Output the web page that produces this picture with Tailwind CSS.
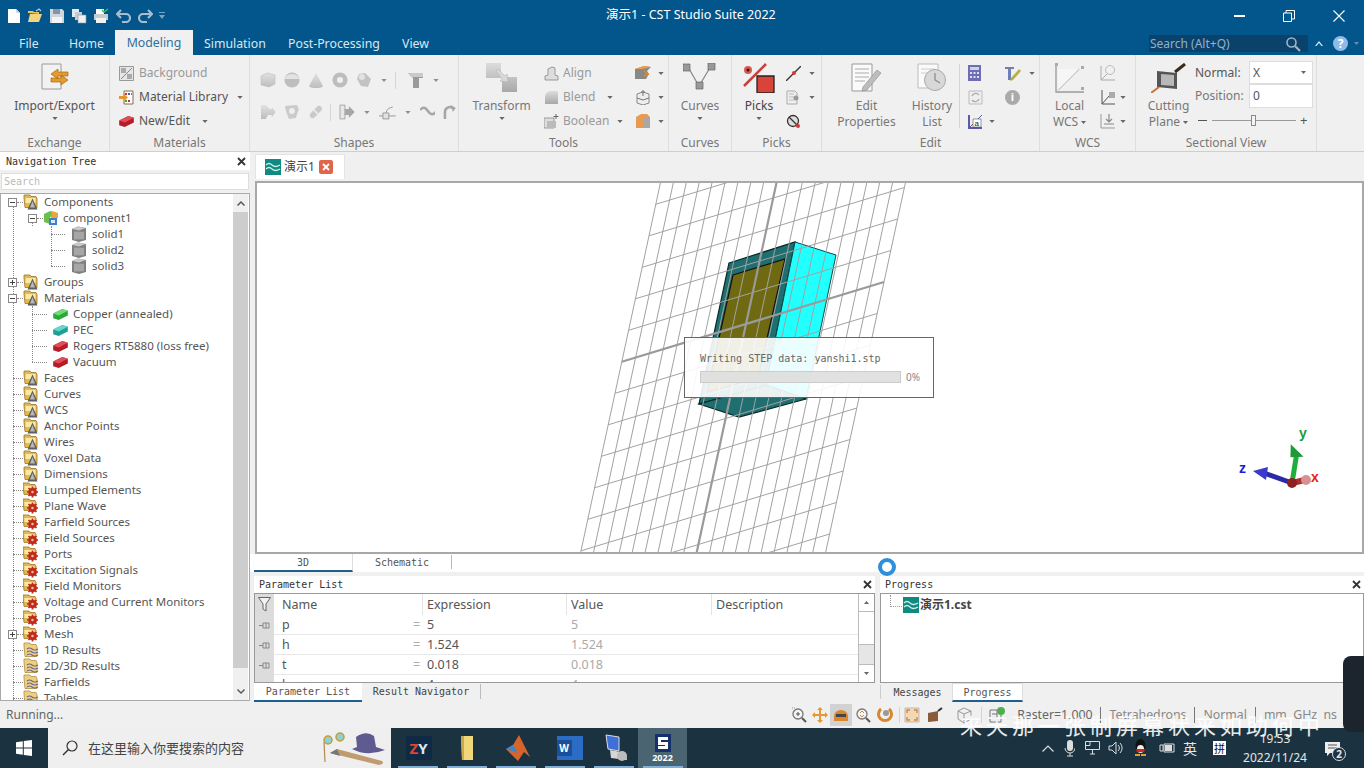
<!DOCTYPE html>
<html lang="zh"><head><meta charset="utf-8"><title>CST Studio Suite 2022</title>
<script src="https://cdn.jsdelivr.net/npm/@tailwindcss/browser@4"></script></head>
<body class="m-0 overflow-hidden">
<svg class="absolute w-0 h-0" aria-hidden="true">
<defs>
<linearGradient id="gy" x1="0" y1="0" x2="0" y2="1"><stop offset="0" stop-color="#dcdcdc"/><stop offset="1" stop-color="#a8a8a8"/></linearGradient>
<symbol id="ftri" viewBox="0 0 16 16"><path d="M1 4V1h6l1 1.500h5l1 2v9H2z" fill="#e3b84e" stroke="#9c7624" stroke-width=".8"/><path d="M2.500 4h10v5h-10z" fill="#fbe9a8"/><path d="M9.500 4.500l5 11H4.500z" fill="#5f5f5f"/><path d="M9.500 7l2.500 6.500H7z" fill="#b8b8b8"/></symbol>
<symbol id="fgear" viewBox="0 0 16 16"><path d="M0 4V1h6l1 1.500h5l1 2v8H1z" fill="#e3b84e" stroke="#9c7624" stroke-width=".8"/><path d="M1.500 4h10v4h-10z" fill="#fbe9a8"/><circle cx="9.500" cy="10" r="4.300" fill="#c22a1c"/><path d="M9.500 4.500v11M4 10h11M5.500 6l8 8M13.500 6l-8 8" stroke="#c22a1c" stroke-width="1.700"/><circle cx="9.500" cy="10" r="1.300" fill="#f0b8a8"/></symbol>
<symbol id="fwave" viewBox="0 0 16 16"><path d="M1 4V1h6l1 1.500h5l1 2v10H2z" fill="#efd07e" stroke="#b08c40" stroke-width=".8"/><path d="M4 7q2.500-2 5 0t6 0M4 10q2.500-2 5 0t6 0M4 13q2.500-2 5 0t6 0" fill="none" stroke="#66669a" stroke-width="1.200"/></symbol>
<symbol id="cube" viewBox="0 0 16 16"><path d="M1 3L7 .5 15 2v12L8 16 1 14z" fill="#7f7f7f"/><path d="M1 3L7 .5 15 2 8 4.500z" fill="#c8c8c8"/><path d="M3 5.500l10 .2v7.500l-10 .3z" fill="#a6a6a6"/></symbol>
<symbol id="bg" viewBox="0 0 16 12"><path d="M0 5L10 0l6 2v5L6 12 0 10z" fill="#2aa838"/><path d="M0 5L10 0l6 2L6 7z" fill="#6fdc78"/></symbol>
<symbol id="bt" viewBox="0 0 16 12"><path d="M0 5L10 0l6 2v5L6 12 0 10z" fill="#1f9f95"/><path d="M0 5L10 0l6 2L6 7z" fill="#63d6cc"/></symbol>
<symbol id="br" viewBox="0 0 16 12"><path d="M0 5L10 0l6 2v5L6 12 0 10z" fill="#b31c28"/><path d="M0 5L10 0l6 2L6 7z" fill="#e24c58"/></symbol>
<symbol id="cst" viewBox="0 0 16 16"><rect width="16" height="16" fill="#0f8a80"/><path d="M1 6q3-3 6 0t8 0M1 10q3-3 6 0t8 0" fill="none" stroke="#cfeee9" stroke-width="1.300"/></symbol>
<symbol id="arr" viewBox="0 0 7 4"><path d="M0 0h7L3.500 4z" fill="#666"/></symbol>
</defs></svg>

<div class="w-[1364px] h-[768px] flex flex-col overflow-hidden relative bg-[#f0f0f0] text-[12px] text-[#555] font-['Noto_Sans','Noto_Sans_CJK_SC',sans-serif]">

<!-- title bar -->
<div class="h-[31px] bg-[#02568c] flex items-center shrink-0 text-white">
  <div class="w-[606px] flex items-center h-full pl-[7px]">
    <svg class="w-[14px] h-4" viewBox="0 0 14 16"><path d="M1 1h8l4 4v10H1z" fill="#fff"/><path d="M9 1v4h4" fill="#cfd8e0"/></svg>
    <svg class="w-4 h-4 ml-[6px]" viewBox="0 0 16 16"><path d="M1 5V3h5l1 1h5v2z" fill="#e9c35f"/><path d="M1 14l2-8h12l-3 8z" fill="#f4d57d"/><path d="M9 3l3-2 2 2" fill="none" stroke="#9fd0ef" stroke-width="1.200"/></svg>
    <svg class="w-[14px] h-[14px] ml-[7px]" viewBox="0 0 14 14"><path d="M0 0h12l2 2v12H0z" fill="#cfd6de"/><path d="M3 0h7v5H3z" fill="#8595a6"/><path d="M2 8h10v6H2z" fill="#f4f4f4"/></svg>
    <svg class="w-4 h-4 ml-[7px]" viewBox="0 0 16 16"><path d="M1 1h7v8H1z" fill="#e6e9ec"/><path d="M4 4h7v8H4z" fill="#c6ccd2"/><path d="M7 7h8v8H7z" fill="#eef0f2" stroke="#8a949e" stroke-width=".6"/></svg>
    <svg class="w-4 h-4 ml-[6px]" viewBox="0 0 16 16"><path d="M3 1h8v5H3z" fill="#fff"/><path d="M1 6h14v6H1z" fill="#c6ccd2"/><path d="M3 10h10v5H3z" fill="#f2f2f2"/><path d="M9 2l2 2 4-3" fill="none" stroke="#3fbf4a" stroke-width="1.500"/></svg>
    <svg class="w-[15px] h-[14px] ml-[7px]" viewBox="0 0 15 14"><path d="M5 1L1 5l4 4M1.500 5H10a3.500 3.500 0 0 1 0 8H6" fill="none" stroke="#a9bccb" stroke-width="2.200"/></svg>
    <svg class="w-[15px] h-[14px] ml-[7px]" viewBox="0 0 15 14"><path d="M10 1l4 4-4 4M13.500 5H5a3.500 3.500 0 0 0 0 8h4" fill="none" stroke="#a9bccb" stroke-width="2.200"/></svg>
    <svg class="w-[6px] h-[7px] ml-[6px]" viewBox="0 0 6 7"><path d="M0 0h6v1H0zM0 3h6L3 7z" fill="#7fa3bd"/></svg>
  </div>
  <div class="text-[12.500px] text-white">演示1 - CST Studio Suite 2022</div>
  <div class="ml-auto flex items-center h-full">
    <div class="w-[50px] flex justify-center"><span class="block w-[11px] h-[2px] bg-white"></span></div>
    <div class="w-[50px] flex justify-center"><svg class="w-3 h-3" viewBox="0 0 12 12"><path d="M.5 3h8v8.500h-8zM3 3V.5h8.500V9H9" fill="none" stroke="#fff"/></svg></div>
    <div class="w-[50px] flex justify-center"><svg class="w-3 h-3" viewBox="0 0 12 12"><path d="M.5.500l11 11M11.500.500l-11 11" stroke="#fff" stroke-width="1.100"/></svg></div>
  </div>
</div>

<!-- tab row -->
<div class="h-6 bg-[#02568c] flex items-end shrink-0 text-[12.300px] text-[#dbe7f0]">
  <div class="h-6 flex items-center pt-[2px] pl-[19px] w-[69px]">File</div>
  <div class="h-6 flex items-center pt-[2px] w-[46px]">Home</div>
  <div class="h-[25px] w-[78px] bg-[#f0f0f0] flex items-center pt-[2px] justify-center text-[#2f6f9e]">Modeling</div>
  <div class="h-6 flex items-center pt-[2px] pl-[11px] w-[95px]">Simulation</div>
  <div class="h-6 flex items-center pt-[2px] w-[114px]">Post-Processing</div>
  <div class="h-6 flex items-center pt-[2px]">View</div>
  <div class="ml-auto h-6 flex items-center pt-[1px]">
    <div class="w-[159px] h-[17px] bg-[#0b426b] flex items-center pl-[1px] text-[12px] text-[#8fb2cc]">Search (Alt+Q)<svg class="w-4 h-4 ml-auto mr-[7px]" viewBox="0 0 16 16"><circle cx="6.500" cy="6.500" r="4.500" fill="none" stroke="#9db5c7" stroke-width="1.600"/><path d="M10 10l5 5" stroke="#9db5c7" stroke-width="2.200"/></svg></div>
    <svg class="w-2 h-[5px] ml-[7px]" viewBox="0 0 8 5"><path d="M0 5l4-5 4 5-1.500 0L4 2 1.500 5z" fill="#dfe8ef"/></svg>
    <div class="w-[15px] h-[15px] rounded-full bg-[#8fbbe8] text-white text-[12px] font-bold flex items-center justify-center ml-[10px]">?</div>
    <svg class="w-[5px] h-[3px] ml-[6px] mr-[5px]" viewBox="0 0 7 4"><path d="M0 0h7L3.500 4z" fill="#5f8fb3"/></svg>
  </div>
</div>

<!-- ribbon -->
<div class="h-[97px] shrink-0 flex border-b border-[#cfcfcf] bg-[#f0f0f0] text-[12px] leading-4 text-[#777] whitespace-nowrap">
  <!-- Exchange -->
  <div class="w-[110px] h-[96px] border-r border-[#dedede] flex flex-col items-center pt-[8px]">
    <svg class="w-7 h-[27px]" viewBox="0 0 28 27"><path d="M1 1h19v25H1z" fill="#f2f2f2" stroke="#9a9a9a"/><path d="M27 9H17v-3l-7 5 7 5v-3h10zM10 15h10v-3l7 5-7 5v-3H10z" fill="#e39a2e" stroke="#a86a14" stroke-width=".7"/></svg>
    <div class="mt-[8px] text-[#555]">Import/Export</div>
    <svg class="w-[6px] h-[3px] mt-[3px]"><use href="#arr"/></svg>
    <div class="mt-auto">Exchange</div>
  </div>
  <!-- Materials -->
  <div class="w-[140px] h-[96px] border-r border-[#dedede] flex flex-col pt-[6px] pl-[9px]">
    <div class="h-6 flex items-center text-[#999]"><svg class="w-[15px] h-[15px]" viewBox="0 0 15 15"><path d="M.5.500h14v14H.5z" fill="#e6e6e6" stroke="#999"/><path d="M2 2h5v5H2zM8 8h5v5H8z" fill="#aaa"/><path d="M2 13L13 2" stroke="#888"/></svg><span class="ml-[5px]">Background</span></div>
    <div class="h-6 flex items-center"><svg class="w-[15px] h-[15px]" viewBox="0 0 15 15"><path d="M5 1h9v13H5z" fill="#fff" stroke="#8a6a4a"/><path d="M6 3h2v2H6z" fill="#c33"/><path d="M9 3h2v2H9z" fill="#36c"/><path d="M12 3h1v2h-1zM6 10h2v2H6z" fill="#3a3"/><path d="M9 10h2v2H9z" fill="#c33"/><path d="M0 6h5V4l4 3.500-4 3.500V9H0z" fill="#e6962c"/></svg><span class="ml-[5px] text-[#555]">Material Library</span><svg class="w-[6px] h-[3px] ml-[9px]"><use href="#arr"/></svg></div>
    <div class="h-6 flex items-center"><svg class="w-[15px] h-[11px]"><use href="#br"/></svg><span class="ml-[5px] text-[#555]">New/Edit</span><svg class="w-[6px] h-[3px] ml-[12px]"><use href="#arr"/></svg></div>
    <div class="mt-auto text-center pr-[9px]">Materials</div>
  </div>
  <!-- Shapes -->
  <div class="w-[209px] h-[96px] border-r border-[#dedede] flex flex-col pl-[10px]">
    <div class="h-8 mt-[9px] flex items-center gap-2 opacity-70">
      <svg class="w-4 h-4" viewBox="0 0 16 16"><path d="M1 4l6-3 8 2v9l-6 3-8-2z" fill="url(#gy)" stroke="#aaa" stroke-width=".6"/></svg>
      <svg class="w-4 h-4" viewBox="0 0 16 16"><circle cx="8" cy="8" r="7.500" fill="#aaa"/><path d="M1 7a7 5 0 0 1 14 0z" fill="#ddd"/></svg>
      <svg class="w-4 h-4" viewBox="0 0 16 16"><path d="M8 1l7 13a7 2 0 0 1-14 0z" fill="url(#gy)"/></svg>
      <svg class="w-4 h-4" viewBox="0 0 16 16"><circle cx="8" cy="8" r="5.300" fill="none" stroke="#a8a8a8" stroke-width="4.500"/></svg>
      <svg class="w-4 h-4" viewBox="0 0 16 16"><path d="M3 2l6-1 6 6-3 8-7-1-4-7z" fill="#b0b0b0"/><circle cx="6" cy="5" r="3" fill="#ddd"/></svg>
      <svg class="w-[6px] h-[3px] ml-[1px]"><use href="#arr"/></svg>
      <span class="block w-px h-[17px] bg-[#ccc]"></span>
      <svg class="w-[18px] h-[17px] ml-[3px]" viewBox="0 0 18 17"><path d="M1 1h15v5l-4 0v10H6V6z" fill="#777"/><path d="M1 1h15v4H4z" fill="#bbb"/></svg>
      <svg class="w-[6px] h-[3px]"><use href="#arr"/></svg>
    </div>
    <div class="h-8 flex items-center gap-2 opacity-70">
      <svg class="w-4 h-4" viewBox="0 0 16 16"><path d="M1 1h5l4 4h2V3l4 5-4 5v-2H8l-2 4H1z" fill="url(#gy)"/></svg>
      <svg class="w-4 h-4" viewBox="0 0 16 16"><path d="M1 2l12-1 2 4-3 9-7 1-3-8z" fill="#bbb"/><circle cx="8" cy="7" r="3" fill="#eee"/></svg>
      <svg class="w-4 h-4" viewBox="0 0 16 16"><path d="M2 10l8-8a3 3 0 0 1 4 4l-8 8a3 3 0 0 1-4-4z" fill="#bbb"/><path d="M6 6l4 4" stroke="#eee" stroke-width="1.500"/></svg>
      <span class="block w-px h-[17px] bg-[#ccc] -ml-[1px]"></span>
      <svg class="w-4 h-4" viewBox="0 0 16 16"><path d="M1 1h5v14H1z" fill="#e4e4e4" stroke="#888"/><path d="M6 5h4V2l6 6-6 6v-3H6z" fill="#888"/></svg>
      <svg class="w-[6px] h-[3px] ml-[1px]"><use href="#arr"/></svg>
      <svg class="w-[17px] h-[15px] ml-px" viewBox="0 0 17 15"><path d="M0 11h17" stroke="#777"/><path d="M4 8h6v6H4z" fill="#ddd" stroke="#777"/><path d="M7 8a8 8 0 0 1 7-6" fill="none" stroke="#777"/></svg>
      <svg class="w-[6px] h-[3px] ml-[1px]"><use href="#arr"/></svg>
      <svg class="w-4 h-3 ml-px" viewBox="0 0 16 12"><path d="M0 4q4-5 8 1t8 1" fill="none" stroke="#888" stroke-width="2.600"/></svg>
      <svg class="w-4 h-4 -ml-[1px]" viewBox="0 0 16 16"><path d="M3 15V8a5 5 0 0 1 8-4" fill="none" stroke="#888" stroke-width="2.600"/><path d="M9 1l5 3-3 4z" fill="#888"/></svg>
    </div>
    <div class="mt-auto text-center pr-[10px]">Shapes</div>
  </div>
  <!-- Tools -->
  <div class="w-[210px] h-[96px] border-r border-[#dedede] flex flex-col">
    <div class="flex h-[72px] pt-[6px]">
      <div class="w-[85px] flex flex-col items-center pt-[2px]">
        <svg class="w-[31px] h-[29px] shrink-0" viewBox="0 0 31 29"><path d="M0 0h15v15H0zM16 14h15v15H16z" fill="url(#gy)"/><path d="M10 8l2-2 7 7 2-2 1 8-8-1 2-2z" fill="#d8d8d8" stroke="#aaa" stroke-width=".5"/></svg>
        <div class="mt-[6px]">Transform</div>
        <svg class="w-[6px] h-[3px] mt-[3px] shrink-0"><use href="#arr"/></svg>
      </div>
      <div class="w-[89px]">
        <div class="h-6 flex items-center"><svg class="w-[15px] h-[15px]" viewBox="0 0 15 15"><path d="M1 14V10l3-1V3l4-2 3 1v7l3 1v4z" fill="#ddd" stroke="#999"/></svg><span class="ml-[4px] text-[#999]">Align</span></div>
        <div class="h-6 flex items-center"><svg class="w-[15px] h-[15px]" viewBox="0 0 15 15"><path d="M1 14V7a6 6 0 0 1 6-6h7v13z" fill="url(#gy)"/></svg><span class="ml-[4px] text-[#999]">Blend</span><svg class="w-[6px] h-[3px] ml-[12px]"><use href="#arr"/></svg></div>
        <div class="h-6 flex items-center"><svg class="w-[15px] h-[15px]" viewBox="0 0 15 15"><path d="M0 4h10v10H0z" fill="#ddd" stroke="#999"/><path d="M3 7h9v7H3z" fill="#bbb"/><path d="M12 0v5M9.500 2.500h5" stroke="#666"/></svg><span class="ml-[4px] text-[#999]">Boolean</span><svg class="w-[6px] h-[3px] ml-[8px]"><use href="#arr"/></svg></div>
      </div>
      <div class="w-[35px] pl-[2px]">
        <div class="h-6 flex items-center"><svg class="w-4 h-4" viewBox="0 0 16 16"><path d="M0 4l9-3 7 1-4 4 2 3-3 5H0z" fill="#888"/><path d="M0 4l9-3 7 1-9 2z" fill="#f0a040"/><path d="M9 6l4 3-4 2" fill="none" stroke="#e08a20" stroke-width="1.500"/></svg><svg class="w-[6px] h-[3px] ml-[7px]"><use href="#arr"/></svg></div>
        <div class="h-6 flex items-center"><svg class="w-4 h-4" viewBox="0 0 16 16"><path d="M2 5l6-2 6 2v9l-6 2-6-2z" fill="#eee" stroke="#888"/><path d="M2 9l6 2 6-2M8 1v6M6 3h4" fill="none" stroke="#777"/></svg><svg class="w-[6px] h-[3px] ml-[7px]"><use href="#arr"/></svg></div>
        <div class="h-6 flex items-center"><svg class="w-4 h-4" viewBox="0 0 16 16"><path d="M1 4l5-3h6l3 3v11H1z" fill="#e89a50"/><path d="M8 4h7v11H8z" fill="#a8a8a8"/></svg><svg class="w-[6px] h-[3px] ml-[7px]"><use href="#arr"/></svg></div>
      </div>
    </div>
    <div class="mt-auto text-center">Tools</div>
  </div>
  <!-- Curves -->
  <div class="w-[63px] h-[96px] border-r border-[#dedede] flex flex-col items-center pt-[8px]">
    <svg class="w-[34px] h-[29px]" viewBox="0 0 34 29"><path d="M5 4L16 23 28 3" fill="none" stroke="#888" stroke-width="1.200"/><path d="M0 1h7v7H0zM13 19h7v7h-7zM25 0h7v7h-7z" fill="#999" stroke="#666" stroke-width=".7"/></svg>
    <div class="mt-[6px]">Curves</div>
    <svg class="w-[6px] h-[3px] mt-[3px]"><use href="#arr"/></svg>
    <div class="mt-auto">Curves</div>
  </div>
  <!-- Picks -->
  <div class="w-[90px] h-[96px] border-r border-[#dedede] flex flex-col">
    <div class="flex h-[72px]">
      <div class="w-[54px] flex flex-col items-center pt-[8px]">
        <svg class="w-8 h-[30px] shrink-0" viewBox="0 0 32 30"><path d="M1 23L23 1" stroke="#c9403a" stroke-width="2.500"/><circle cx="5" cy="7" r="4" fill="#d65a50"/><circle cx="5" cy="7" r="1.500" fill="#400"/><path d="M14 13h17v17H14z" fill="#d8443a" stroke="#222" stroke-width="1.300"/></svg>
        <div class="mt-[5px] text-[#444]">Picks</div>
        <svg class="w-[6px] h-[3px] mt-[3px] shrink-0"><use href="#arr"/></svg>
      </div>
      <div class="pt-[6px]">
        <div class="h-6 flex items-center"><svg class="w-[15px] h-[15px]" viewBox="0 0 15 15"><path d="M0 15L15 0" stroke="#333" stroke-width="1.300"/><circle cx="8" cy="7" r="2" fill="#d33"/></svg><svg class="w-[6px] h-[3px] ml-[8px]"><use href="#arr"/></svg></div>
        <div class="h-6 flex items-center"><svg class="w-[15px] h-[15px]" viewBox="0 0 15 15"><path d="M1 1h8l2 2v11H1z" fill="#eee" stroke="#aaa"/><path d="M3 4h5M3 7h5M3 10h5" stroke="#bbb"/><circle cx="10" cy="8" r="2.500" fill="#999"/></svg><svg class="w-[6px] h-[3px] ml-[8px]"><use href="#arr"/></svg></div>
        <div class="h-6 flex items-center"><svg class="w-[15px] h-[15px]" viewBox="0 0 15 15"><circle cx="7" cy="7" r="5.500" fill="#ddd" stroke="#333" stroke-width="1.300"/><path d="M3 3l9 9" stroke="#333" stroke-width="1.300"/><circle cx="12" cy="12" r="2" fill="#d33"/></svg></div>
      </div>
    </div>
    <div class="mt-auto text-center">Picks</div>
  </div>
  <!-- Edit -->
  <div class="w-[218px] h-[96px] border-r border-[#dedede] flex flex-col">
    <div class="flex h-[72px]">
      <div class="w-[89px] flex flex-col items-center pt-[8px] leading-4">
        <svg class="w-[31px] h-[29px] shrink-0" viewBox="0 0 31 29"><path d="M1 1h20v27H1z" fill="#fafafa" stroke="#999"/><path d="M4 6h14M4 10h14M4 14h14M4 18h10" stroke="#aaa"/><path d="M12 24l14-17 4 3-14 17-5 1z" fill="#bdbdbd" stroke="#888" stroke-width=".6"/></svg>
        <div class="mt-[6px]">Edit</div><div>Properties</div>
      </div>
      <div class="w-[42px] flex flex-col items-center pt-[8px] leading-4">
        <svg class="w-[31px] h-[29px] shrink-0" viewBox="0 0 31 29"><path d="M1 1h20v24H1z" fill="#fafafa" stroke="#bbb"/><path d="M4 6h14M4 10h12" stroke="#ccc"/><circle cx="18" cy="17" r="10.500" fill="#d8d8d8" stroke="#aaa"/><path d="M18 10v7l5 3" fill="none" stroke="#888" stroke-width="1.200"/></svg>
        <div class="mt-[6px]">History</div><div>List</div>
      </div>
      <div class="w-px h-[64px] mt-[9px] bg-[#d4d4d4] ml-[6px] mr-[8px]"></div>
      <div class="w-[37px] pt-[6px]">
        <div class="h-6 flex items-center"><svg class="w-[13px] h-4" viewBox="0 0 13 16"><path d="M0 0h13v16H0z" fill="#6d6fb2"/><path d="M2 2h9v3H2z" fill="#cfd0ea"/><path d="M2 7h2v2H2zM5.500 7h2v2h-2zM9 7h2v2H9zM2 11h2v2H2zM5.500 11h2v2h-2zM9 11h2v2H9z" fill="#e0e0f0"/></svg></div>
        <div class="h-6 flex items-center"><svg class="w-[15px] h-[15px]" viewBox="0 0 15 15"><path d="M1 1h13v13H1z" fill="#eee" stroke="#bbb"/><path d="M4 6a4 4 0 0 1 7-1M11 9a4 4 0 0 1-7 1" fill="none" stroke="#aaa" stroke-width="1.300"/></svg></div>
        <div class="h-6 flex items-center"><svg class="w-[15px] h-[15px]" viewBox="0 0 15 15"><path d="M1 1v13h13" fill="none" stroke="#5a5aa8" stroke-width="2"/><path d="M1 14L14 1" stroke="#5a5aa8"/><path d="M5 5h8v8H5z" fill="#fff" stroke="#555" stroke-width=".6"/><text x="6.500" y="12" font-size="8" fill="#222" font-family="Liberation Sans">a</text></svg><svg class="w-[6px] h-[3px] ml-[6px]"><use href="#arr"/></svg></div>
      </div>
      <div class="pt-[6px]">
        <div class="h-6 flex items-center"><svg class="w-[16px] h-[15px]" viewBox="0 0 16 15"><path d="M0 1h9v2H6v11H3V3H0z" fill="#6d7fb5"/><path d="M6 12L14 3l2 2-8 9-3 1z" fill="#b8b040"/></svg><svg class="w-[6px] h-[3px] ml-[8px]"><use href="#arr"/></svg></div>
        <div class="h-6 flex items-center"><div class="w-[15px] h-[15px] rounded-full bg-[#aaa] text-white text-[11px] font-bold flex items-center justify-center">i</div></div>
      </div>
    </div>
    <div class="mt-auto text-center">Edit</div>
  </div>
  <!-- WCS -->
  <div class="w-[96px] h-[96px] border-r border-[#dedede] flex flex-col">
    <div class="flex h-[72px]">
      <div class="w-[59px] flex flex-col items-center pt-[8px] leading-4">
        <svg class="w-[30px] h-[30px] shrink-0" viewBox="0 0 30 30"><path d="M1 1v28h28" fill="none" stroke="#999" stroke-width="1.300"/><path d="M3 27L24 6" stroke="#aaa" stroke-width="1.300"/><path d="M3 27V6h21z" fill="#f6f6f6"/><path d="M0 0h3v3H0zM26 3h3v3h-3zM26 24h3v3h-3z" fill="#aaa"/></svg>
        <div class="mt-[5px]">Local</div><div class="flex items-center">WCS<svg class="w-[5px] h-[3px] ml-[3px]"><use href="#arr"/></svg></div>
      </div>
      <div class="pt-[6px] pl-[1px]">
        <div class="h-6 flex items-center"><svg class="w-4 h-4" viewBox="0 0 16 16"><path d="M1 1v14h14M1 15L8 8" fill="none" stroke="#aaa"/><circle cx="10" cy="5" r="4.500" fill="#f0f0f0" stroke="#bbb"/></svg></div>
        <div class="h-6 flex items-center"><svg class="w-4 h-4" viewBox="0 0 16 16"><path d="M2 1v14h13M2 15L9 7" fill="none" stroke="#555"/><path d="M9 3h6v6H9z" fill="#aaa"/></svg><svg class="w-[6px] h-[3px] ml-[4px]"><use href="#arr"/></svg></div>
        <div class="h-6 flex items-center"><svg class="w-4 h-4" viewBox="0 0 16 16"><path d="M1 1v14h14" fill="none" stroke="#999"/><path d="M9 1v8M6 6l3 3 3-3M4 11h10" fill="none" stroke="#888" stroke-width="1.200"/></svg><svg class="w-[6px] h-[3px] ml-[4px]"><use href="#arr"/></svg></div>
      </div>
    </div>
    <div class="mt-auto text-center">WCS</div>
  </div>
  <!-- Sectional -->
  <div class="w-[181px] h-[96px] border-r border-[#dedede] flex flex-col">
    <div class="flex h-[72px]">
      <div class="w-[59px] pl-[6px] flex flex-col items-center pt-[8px] leading-4">
        <svg class="w-9 h-[30px] shrink-0" viewBox="0 0 36 30"><path d="M6 8l20 2v16L6 24z" fill="#555"/><path d="M10 11l13 1v11l-13-1z" fill="#b8b8b8"/><path d="M24 9l10-8" stroke="#3a2a1a" stroke-width="3"/><path d="M0 30l8-6" stroke="#c9703a" stroke-width="2"/></svg>
        <div class="mt-[5px]">Cutting</div><div class="flex items-center">Plane<svg class="w-[5px] h-[3px] ml-[3px]"><use href="#arr"/></svg></div>
      </div>
      <div class="pt-[6px] w-[118px]">
        <div class="flex items-center h-[23px]"><span class="w-[54px] text-[#555]">Normal:</span><div class="w-[64px] h-[23px] bg-white border border-[#ddd] flex items-center pl-[3px] text-[#555]">X<svg class="w-[5px] h-[3px] ml-auto mr-[6px]"><use href="#arr"/></svg></div></div>
        <div class="flex items-center h-[24px]"><span class="w-[54px]">Position:</span><div class="w-[64px] h-[24px] bg-white border border-[#ddd] flex items-center pl-[3px] text-[#555]">0</div></div>
        <div class="flex items-center h-6 pl-[3px] text-[#555]"><span class="w-[9px] h-px bg-[#555]"></span><div class="relative w-[84px] h-px bg-[#999] ml-[5px]"><span class="absolute left-[39px] -top-[5px] w-[5px] h-[11px] bg-[#f4f4f4] border border-[#888]"></span></div><span class="ml-[4px] text-[13px]">+</span></div>
      </div>
    </div>
    <div class="mt-auto text-center">Sectional View</div>
  </div>
</div>

<!-- main -->
<div class="h-[550px] shrink-0 flex">
  <!-- nav panel -->
  <div class="w-[250px] shrink-0 flex flex-col">
    <div class="h-[18px] bg-white flex items-center px-[6px] font-['DejaVu_Sans_Mono',monospace] text-[10px] text-[#333]">Navigation Tree<svg class="w-[9px] h-[9px] ml-auto -mr-[2px]" viewBox="0 0 9 9"><path d="M1 1l7 7M8 1l-7 7" stroke="#333" stroke-width="1.800"/></svg></div>
    <div class="h-[17px] mt-[3px] mx-[1px] bg-white border border-[#ddd] flex items-center pl-[2px] font-['DejaVu_Sans_Mono',monospace] text-[10px] text-[#bbb]">Search</div>
    <div class="h-[508px] mt-[3px] border border-[#aaa] bg-white flex overflow-hidden relative text-[11.500px] text-[#555] leading-4">
      <!-- dotted trunk lines -->
      <span class="absolute left-[12px] top-[8px] h-[510px] border-l border-dotted border-[#888]"></span>
      <span class="absolute left-[31px] top-[24px] h-[8px] border-l border-dotted border-[#888]"></span>
      <span class="absolute left-[50px] top-[32px] h-[40px] border-l border-dotted border-[#888]"></span>
      <span class="absolute left-[31px] top-[112px] h-[56px] border-l border-dotted border-[#888]"></span>
      <div class="w-[232px] shrink-0 relative">
        <div class="flex items-center h-4 pl-[7px]"><span class="relative w-[9px] h-[9px] border border-[#888] bg-white flex items-center justify-center"><span class="w-[5px] h-px bg-[#444]"></span></span><span class="w-[6px] border-t border-dotted border-[#888]"></span><svg class="w-4 h-4"><use href="#ftri"/></svg><span class="ml-[5px]">Components</span></div>
        <div class="flex items-center h-4 pl-[27px]"><span class="relative w-[9px] h-[9px] border border-[#888] bg-white flex items-center justify-center"><span class="w-[5px] h-px bg-[#444]"></span></span><span class="w-[6px] border-t border-dotted border-[#888]"></span><svg class="w-4 h-4" viewBox="0 0 16 16"><path d="M1 4l6-3 6 2v4H7v7L1 12z" fill="#6fbe4a"/><path d="M9 1l6 2v5H8z" fill="#e9a63c"/><path d="M6 8h8v7H6z" fill="#3f7fd0"/><path d="M8 10h4v3H8z" fill="#d8e8fa"/></svg><span class="ml-[4px]">component1</span></div>
        <div class="flex items-center h-4 pl-[50px]"><span class="w-[14px] border-t border-dotted border-[#888]"></span><svg class="w-4 h-4 ml-[6px]"><use href="#cube"/></svg><span class="ml-[5px]">solid1</span></div>
        <div class="flex items-center h-4 pl-[50px]"><span class="w-[14px] border-t border-dotted border-[#888]"></span><svg class="w-4 h-4 ml-[6px]"><use href="#cube"/></svg><span class="ml-[5px]">solid2</span></div>
        <div class="flex items-center h-4 pl-[50px]"><span class="w-[14px] border-t border-dotted border-[#888]"></span><svg class="w-4 h-4 ml-[6px]"><use href="#cube"/></svg><span class="ml-[5px]">solid3</span></div>
        <div class="flex items-center h-4 pl-[7px]"><span class="relative w-[9px] h-[9px] border border-[#888] bg-white flex items-center justify-center text-[#444]"><svg class="w-[5px] h-[5px]" viewBox="0 0 5 5"><path d="M0 2.500h5M2.500 0v5" stroke="#444"/></svg></span><span class="w-[6px] border-t border-dotted border-[#888]"></span><svg class="w-4 h-4"><use href="#ftri"/></svg><span class="ml-[5px]">Groups</span></div>
        <div class="flex items-center h-4 pl-[7px]"><span class="relative w-[9px] h-[9px] border border-[#888] bg-white flex items-center justify-center"><span class="w-[5px] h-px bg-[#444]"></span></span><span class="w-[6px] border-t border-dotted border-[#888]"></span><svg class="w-4 h-4"><use href="#ftri"/></svg><span class="ml-[5px]">Materials</span></div>
        <div class="flex items-center h-4 pl-[31px]"><span class="w-[15px] border-t border-dotted border-[#888]"></span><svg class="w-[15px] h-[11px] ml-[6px]"><use href="#bg"/></svg><span class="ml-[5px]">Copper (annealed)</span></div>
        <div class="flex items-center h-4 pl-[31px]"><span class="w-[15px] border-t border-dotted border-[#888]"></span><svg class="w-[15px] h-[11px] ml-[6px]"><use href="#bt"/></svg><span class="ml-[5px]">PEC</span></div>
        <div class="flex items-center h-4 pl-[31px]"><span class="w-[15px] border-t border-dotted border-[#888]"></span><svg class="w-[15px] h-[11px] ml-[6px]"><use href="#br"/></svg><span class="ml-[5px]">Rogers RT5880 (loss free)</span></div>
        <div class="flex items-center h-4 pl-[31px]"><span class="w-[15px] border-t border-dotted border-[#888]"></span><svg class="w-[15px] h-[11px] ml-[6px]"><use href="#br"/></svg><span class="ml-[5px]">Vacuum</span></div>
        <div class="flex items-center h-4 pl-[12px]"><span class="w-[10px] border-t border-dotted border-[#888]"></span><svg class="w-4 h-4"><use href="#ftri"/></svg><span class="ml-[5px]">Faces</span></div>
        <div class="flex items-center h-4 pl-[12px]"><span class="w-[10px] border-t border-dotted border-[#888]"></span><svg class="w-4 h-4"><use href="#ftri"/></svg><span class="ml-[5px]">Curves</span></div>
        <div class="flex items-center h-4 pl-[12px]"><span class="w-[10px] border-t border-dotted border-[#888]"></span><svg class="w-4 h-4"><use href="#ftri"/></svg><span class="ml-[5px]">WCS</span></div>
        <div class="flex items-center h-4 pl-[12px]"><span class="w-[10px] border-t border-dotted border-[#888]"></span><svg class="w-4 h-4"><use href="#ftri"/></svg><span class="ml-[5px]">Anchor Points</span></div>
        <div class="flex items-center h-4 pl-[12px]"><span class="w-[10px] border-t border-dotted border-[#888]"></span><svg class="w-4 h-4"><use href="#ftri"/></svg><span class="ml-[5px]">Wires</span></div>
        <div class="flex items-center h-4 pl-[12px]"><span class="w-[10px] border-t border-dotted border-[#888]"></span><svg class="w-4 h-4"><use href="#ftri"/></svg><span class="ml-[5px]">Voxel Data</span></div>
        <div class="flex items-center h-4 pl-[12px]"><span class="w-[10px] border-t border-dotted border-[#888]"></span><svg class="w-4 h-4"><use href="#ftri"/></svg><span class="ml-[5px]">Dimensions</span></div>
        <div class="flex items-center h-4 pl-[12px]"><span class="w-[10px] border-t border-dotted border-[#888]"></span><svg class="w-4 h-4"><use href="#fgear"/></svg><span class="ml-[5px]">Lumped Elements</span></div>
        <div class="flex items-center h-4 pl-[12px]"><span class="w-[10px] border-t border-dotted border-[#888]"></span><svg class="w-4 h-4"><use href="#fgear"/></svg><span class="ml-[5px]">Plane Wave</span></div>
        <div class="flex items-center h-4 pl-[12px]"><span class="w-[10px] border-t border-dotted border-[#888]"></span><svg class="w-4 h-4"><use href="#fgear"/></svg><span class="ml-[5px]">Farfield Sources</span></div>
        <div class="flex items-center h-4 pl-[12px]"><span class="w-[10px] border-t border-dotted border-[#888]"></span><svg class="w-4 h-4"><use href="#fgear"/></svg><span class="ml-[5px]">Field Sources</span></div>
        <div class="flex items-center h-4 pl-[12px]"><span class="w-[10px] border-t border-dotted border-[#888]"></span><svg class="w-4 h-4"><use href="#fgear"/></svg><span class="ml-[5px]">Ports</span></div>
        <div class="flex items-center h-4 pl-[12px]"><span class="w-[10px] border-t border-dotted border-[#888]"></span><svg class="w-4 h-4"><use href="#fgear"/></svg><span class="ml-[5px]">Excitation Signals</span></div>
        <div class="flex items-center h-4 pl-[12px]"><span class="w-[10px] border-t border-dotted border-[#888]"></span><svg class="w-4 h-4"><use href="#fgear"/></svg><span class="ml-[5px]">Field Monitors</span></div>
        <div class="flex items-center h-4 pl-[12px]"><span class="w-[10px] border-t border-dotted border-[#888]"></span><svg class="w-4 h-4"><use href="#fgear"/></svg><span class="ml-[5px]">Voltage and Current Monitors</span></div>
        <div class="flex items-center h-4 pl-[12px]"><span class="w-[10px] border-t border-dotted border-[#888]"></span><svg class="w-4 h-4"><use href="#fgear"/></svg><span class="ml-[5px]">Probes</span></div>
        <div class="flex items-center h-4 pl-[7px]"><span class="relative w-[9px] h-[9px] border border-[#888] bg-white flex items-center justify-center"><svg class="w-[5px] h-[5px]" viewBox="0 0 5 5"><path d="M0 2.500h5M2.500 0v5" stroke="#444"/></svg></span><span class="w-[6px] border-t border-dotted border-[#888]"></span><svg class="w-4 h-4"><use href="#fgear"/></svg><span class="ml-[5px]">Mesh</span></div>
        <div class="flex items-center h-4 pl-[12px]"><span class="w-[10px] border-t border-dotted border-[#888]"></span><svg class="w-4 h-4"><use href="#fwave"/></svg><span class="ml-[5px]">1D Results</span></div>
        <div class="flex items-center h-4 pl-[12px]"><span class="w-[10px] border-t border-dotted border-[#888]"></span><svg class="w-4 h-4"><use href="#fwave"/></svg><span class="ml-[5px]">2D/3D Results</span></div>
        <div class="flex items-center h-4 pl-[12px]"><span class="w-[10px] border-t border-dotted border-[#888]"></span><svg class="w-4 h-4"><use href="#fwave"/></svg><span class="ml-[5px]">Farfields</span></div>
        <div class="flex items-center h-4 pl-[12px]"><span class="w-[10px] border-t border-dotted border-[#888]"></span><svg class="w-4 h-4"><use href="#fwave"/></svg><span class="ml-[5px]">Tables</span></div>
      </div>
      <div class="w-[15px] shrink-0 flex flex-col bg-[#f0f0f0]">
        <div class="h-[18px] flex items-center justify-center"><svg class="w-[8px] h-[5px]" viewBox="0 0 8 5"><path d="M0 4l4-4 4 4-1 1-3-3-3 3z" fill="#555"/></svg></div>
        <div class="h-[456px] bg-[#cdcdcd]"></div>
        <div class="flex-1 flex items-end justify-center pb-[6px]"><svg class="w-[8px] h-[5px]" viewBox="0 0 8 5"><path d="M0 1l4 4 4-4-1-1-3 3-3-3z" fill="#555"/></svg></div>
      </div>
    </div>
  </div>

  <!-- right -->
  <div class="flex-1 flex flex-col min-w-0">
    <div class="h-[29px] pl-[5px] pt-[2px] shrink-0">
      <div class="w-[90px] h-[25px] bg-white border border-[#e4e4e4] border-b-0 flex items-center pl-[9px]"><svg class="w-4 h-4"><use href="#cst"/></svg><span class="ml-[3px] text-[#444]">演示1</span><span class="ml-[4px] w-[14px] h-[14px] rounded-[2px] bg-[#e0664a] flex items-center justify-center"><svg class="w-2 h-2" viewBox="0 0 8 8"><path d="M1 1l6 6M7 1L1 7" stroke="#fff" stroke-width="1.800"/></svg></span></div>
    </div>
    <!-- canvas -->
    <div class="h-[373px] ml-[5px] border-2 border-[#a8a8a8] bg-white relative overflow-hidden shrink-0">
      <svg class="block" width="1105" height="369" viewBox="257 183 1105 369">
        <path d="M729 263L795 242L766 385L699 404Z" fill="#1f6f70" stroke="#06282a" stroke-width="1.200"/>
        <path d="M733 275L785 259L758 378L707 392Z" fill="#6f6a12" stroke="#111" stroke-width="1.200"/>
        <path d="M795 242L836 255L806 399L766 385Z" fill="#22ffff" stroke="#0a4a4a" stroke-width="1"/>
        <path d="M699 404L739 417L806 399L766 385Z" fill="#1f6f70" stroke="#06282a" stroke-width="1.200"/>
        <g transform="matrix(13.800 -4.200 -6.800 31.500 746 324)" fill="none" stroke="#a2a2a2">
          <path vector-effect="non-scaling-stroke" stroke-width="1" d="M-9 -7V9M-8 -7V9M-7 -7V9M-6 -7V9M-5 -7V9M-4 -7V9M-3 -7V9M-2 -7V9M-1 -7V9M1 -7V9M2 -7V9M3 -7V9M4 -7V9M5 -7V9M6 -7V9M7 -7V9M8 -7V9M9 -7V9M10 -7V9M-9 -7H10M-9 -6H10M-9 -5H10M-9 -4H10M-9 -3H10M-9 -2H10M-9 -1H10M-9 1H10M-9 2H10M-9 3H10M-9 4H10M-9 5H10M-9 6H10M-9 7H10M-9 8H10M-9 9H10"/>
          <path vector-effect="non-scaling-stroke" stroke-width="2.200" stroke="#9a9a9a" d="M0 -7V9M-9 0H10"/>
        </g>
        <!-- axes -->
        <path d="M1292 483L1297 452" stroke="#1fae3c" stroke-width="5"/>
        <path d="M1290 445L1304 456L1291 458Z" transform="rotate(6 1297 452)" fill="#1f9a38"/>
        <path d="M1292 483L1264 473" stroke="#2a2aa8" stroke-width="5"/>
        <path d="M1253 471L1268 467L1266 480Z" fill="#3a3ad0"/>
        <path d="M1292 483L1305 480" stroke="#a83030" stroke-width="6"/>
        <circle cx="1292" cy="483" r="5" fill="#8f2020"/>
        <circle cx="1306" cy="480" r="5" fill="#d89090"/>
        <text x="1299" y="438" font-size="14" font-weight="700" fill="#1f9a38" font-family="Liberation Sans">y</text>
        <text x="1239" y="473" font-size="14" font-weight="700" fill="#1c1cd8" font-family="Liberation Sans">z</text>
        <text x="1311" y="482" font-size="14" font-weight="700" fill="#e81c1c" font-family="Liberation Sans">x</text>
      </svg>
      <!-- progress dialog -->
      <div class="absolute left-[427px] top-[154px] w-[250px] h-[61px] border border-[#666] bg-white/90 pt-[13px] pl-[15px] font-['DejaVu_Sans_Mono',monospace] text-[10px] text-[#666] leading-[16px]">
        <div>Writing STEP data: yanshi1.stp</div>
        <div class="flex items-center mt-[2px]"><div class="w-[201px] h-[12px] bg-[#dedede]/90 border border-[#ccc]"></div><span class="ml-[5px] text-[#888] font-['Noto_Sans',sans-serif]">0%</span></div>
      </div>
    </div>
    <!-- view tabs -->
    <div class="h-[18px] bg-white shrink-0 flex font-['DejaVu_Sans_Mono',monospace] text-[10px] text-[#555]">
      <div class="w-[99px] h-[18px] flex items-center justify-center border-b-2 border-[#1f5f8f] border-r border-r-[#ddd] ml-[4px]">3D</div>
      <div class="w-[99px] flex items-center justify-center border-r border-[#bbb] h-[14px] mt-[1px]">Schematic</div>
    </div>
    <div class="h-[4px] shrink-0"></div>
    <!-- bottom panels -->
    <div class="flex-1 flex min-h-0">
      <div class="w-[621px] ml-[4px] flex flex-col shrink-0">
        <div class="h-[17px] bg-white flex items-center pl-[5px] font-['DejaVu_Sans_Mono',monospace] text-[10px] text-[#333]">Parameter List<svg class="w-[9px] h-[9px] ml-auto mr-[3px]" viewBox="0 0 9 9"><path d="M1 1l7 7M8 1l-7 7" stroke="#333" stroke-width="1.800"/></svg></div>
        <div class="h-[90px] border border-[#999] bg-white flex overflow-hidden text-[12.500px] leading-5">
          <div class="w-[19px] shrink-0 bg-[#dcdcdc] flex flex-col items-center">
            <div class="h-[21px] flex items-center"><svg class="w-[13px] h-[15px]" viewBox="0 0 13 15"><path d="M.5.500h12L8 7v7L5 12V7z" fill="#f2f2f2" stroke="#666"/></svg></div>
            <div class="h-5 flex items-center"><svg class="w-[11px] h-[7px]" viewBox="0 0 11 7"><path d="M0 3.500h4M4 1h6v5H4zM7 1v5" fill="none" stroke="#888"/></svg></div>
            <div class="h-5 flex items-center"><svg class="w-[11px] h-[7px]" viewBox="0 0 11 7"><path d="M0 3.500h4M4 1h6v5H4zM7 1v5" fill="none" stroke="#888"/></svg></div>
            <div class="h-5 flex items-center"><svg class="w-[11px] h-[7px]" viewBox="0 0 11 7"><path d="M0 3.500h4M4 1h6v5H4zM7 1v5" fill="none" stroke="#888"/></svg></div>
          </div>
          <div class="flex-1 min-w-0">
            <div class="h-[21px] flex items-center">
              <span class="w-[149px] pl-[8px] border-r border-[#e4e4e4] h-[21px] flex items-center">Name</span>
              <span class="w-[144px] pl-[4px] border-r border-[#e4e4e4] h-[21px] flex items-center">Expression</span>
              <span class="w-[145px] pl-[4px] border-r border-[#e4e4e4] h-[21px] flex items-center">Value</span>
              <span class="pl-[4px]">Description</span>
            </div>
            <div class="h-5 flex items-center border-b border-[#e8e8e8]"><span class="w-[139px] pl-[8px]">p</span><span class="w-[10px] text-[#aaa]">=</span><span class="w-[144px] pl-[4px]">5</span><span class="pl-[4px] text-[#aaa]">5</span></div>
            <div class="h-5 flex items-center border-b border-[#e8e8e8]"><span class="w-[139px] pl-[8px]">h</span><span class="w-[10px] text-[#aaa]">=</span><span class="w-[144px] pl-[4px]">1.524</span><span class="pl-[4px] text-[#aaa]">1.524</span></div>
            <div class="h-5 flex items-center border-b border-[#e8e8e8]"><span class="w-[139px] pl-[8px]">t</span><span class="w-[10px] text-[#aaa]">=</span><span class="w-[144px] pl-[4px]">0.018</span><span class="pl-[4px] text-[#aaa]">0.018</span></div>
            <div class="h-5 flex items-center"><span class="w-[139px] pl-[8px]">l</span><span class="w-[10px] text-[#aaa]">=</span><span class="w-[144px] pl-[4px]">4</span><span class="pl-[4px] text-[#aaa]">4</span></div>
          </div>
          <div class="w-[16px] shrink-0 flex flex-col bg-[#e6e6e6] border-l border-[#bbb]">
            <div class="h-[18px] bg-white border-b border-[#bbb] flex items-center justify-center"><svg class="w-[5px] h-[3px] rotate-180"><use href="#arr"/></svg></div>
            <div class="h-[33px] bg-white border-b border-[#bbb]"></div>
            <div class="flex-1"></div>
            <div class="h-[18px] bg-white border-t border-[#bbb] flex items-center justify-center"><svg class="w-[5px] h-[3px]"><use href="#arr"/></svg></div>
          </div>
        </div>
        <div class="h-[19px] flex font-['DejaVu_Sans_Mono',monospace] text-[10px] text-[#444]">
          <div class="w-[108px] bg-white border-b-2 border-[#1f5f8f] flex items-center justify-center text-[#555]">Parameter List</div>
          <div class="w-[119px] flex items-center justify-center h-[15px] mt-[1px] border-r border-[#bbb]">Result Navigator</div>
        </div>
      </div>
      <div class="flex-1 ml-[1px] flex flex-col min-w-0 pl-[4px]">
        <div class="h-[17px] bg-white flex items-center pl-[5px] font-['DejaVu_Sans_Mono',monospace] text-[10px] text-[#333]">Progress<svg class="w-[9px] h-[9px] ml-auto mr-[3px]" viewBox="0 0 9 9"><path d="M1 1l7 7M8 1l-7 7" stroke="#333" stroke-width="1.800"/></svg></div>
        <div class="h-[90px] border border-[#999] bg-white flex items-start pt-[1px] pl-[9px]">
          <span class="w-[12px] h-[12px] border-l border-b border-dotted border-[#999]"></span>
          <svg class="w-4 h-4 mt-[2px] ml-[1px]"><use href="#cst"/></svg><span class="font-bold text-[#444] mt-[1px] ml-[1px]">演示1.cst</span>
        </div>
        <div class="h-[19px] flex font-['DejaVu_Sans_Mono',monospace] text-[10px] text-[#444]">
          <div class="w-[72px] border-l border-[#ccc] mt-[2px] h-[14px] flex items-center justify-center pl-[2px]">Messages</div>
          <div class="w-[71px] bg-white border-b-2 border-t border-x border-[#ddd] border-b-[#1f5f8f] flex items-center justify-center text-[#555]">Progress</div>
        </div>
      </div>
    </div>
  </div>
</div>

<!-- status bar -->
<div class="h-[26px] shrink-0 flex items-center pl-[6px] text-[12px] text-[#666]">
  <span>Running...</span>
  <div class="ml-auto flex items-center pr-[27px] text-[12.300px] whitespace-pre">
    <svg class="w-4 h-4" viewBox="0 0 16 16"><circle cx="7" cy="7" r="5" fill="#f4f4f4" stroke="#777" stroke-width="1.300"/><path d="M5 7h4M7 5v4" stroke="#555"/><path d="M11 11l4 4" stroke="#555" stroke-width="2"/><path d="M1 1h4" stroke="#999" stroke-dasharray="1 1"/></svg>
    <svg class="w-4 h-4 ml-[5px]" viewBox="0 0 16 16"><path d="M8 0l3 3H9v4h4V5l3 3-3 3V9H9v4h2l-3 3-3-3h2V9H3v2L0 8l3-3v2h4V3H5z" fill="#e39a2e"/></svg>
    <div class="w-[22px] h-[22px] ml-[2px] bg-[#d2d2d2] flex items-center justify-center"><svg class="w-4 h-[13px]" viewBox="0 0 16 13"><path d="M1 7a7 6 0 0 1 14 0v5H1z" fill="#d8872c"/><path d="M3 5h10v3H3z" fill="#444"/></svg></div>
    <svg class="w-4 h-4 ml-[3px]" viewBox="0 0 16 16"><circle cx="7" cy="7" r="5" fill="#f4f4f4" stroke="#777" stroke-width="1.300"/><path d="M5 6l2-2 2 2M5 8l2 2 2-2" fill="none" stroke="#d8872c"/><path d="M11 11l4 4" stroke="#555" stroke-width="2"/></svg>
    <svg class="w-4 h-4 ml-[6px]" viewBox="0 0 16 16"><path d="M4 2a6.500 6.500 0 1 0 8 0" fill="none" stroke="#d8872c" stroke-width="3"/><circle cx="9" cy="6" r="3" fill="#999"/></svg>
    <span class="w-px h-[16px] bg-[#d4d4d4] ml-[6px]"></span>
    <svg class="w-4 h-4 ml-[4px]" viewBox="0 0 16 16"><path d="M1 1h14v14H1z" fill="#f2d8b8" stroke="#bbb"/><path d="M3 6V3h3M13 6V3h-3M3 10v3h3M13 10v3h-3" fill="none" stroke="#d8872c" stroke-width="1.300"/></svg>
    <svg class="w-4 h-4 ml-[7px]" viewBox="0 0 16 16"><path d="M1 6l10-2v10L1 15z" fill="#8a5a3a"/><path d="M11 4l4-3" stroke="#333" stroke-width="2"/></svg>
    <svg class="w-[17px] h-[17px] ml-[13px]" viewBox="0 0 17 17"><path d="M2 4l6-3 7 3v8l-7 4-6-4zM2 4l6 3 7-3M8 7v9" fill="none" stroke="#999"/></svg>
    <span class="w-px h-[16px] bg-[#d4d4d4] ml-[8px]"></span>
    <svg class="w-4 h-4 ml-[7px]" viewBox="0 0 16 16"><path d="M1 3h11v12H1z" fill="#eee" stroke="#777"/><path d="M3 7h5M3 11h5M8 3v12" stroke="#777"/><circle cx="12" cy="4" r="4" fill="#4fae50"/></svg>
    <span class="ml-[12px]">Raster=1.000</span>
    <span class="w-px h-[16px] bg-[#777] ml-[8px]"></span>
    <span class="ml-[8px] text-[#888]">Tetrahedrons</span>
    <span class="w-px h-[16px] bg-[#777] ml-[8px]"></span>
    <span class="ml-[8px] text-[#888]">Normal</span>
    <span class="w-px h-[16px] bg-[#777] ml-[8px]"></span>
    <span class="ml-[8px] text-[#888]">mm  GHz  ns</span>
  </div>
</div>

<!-- taskbar -->
<div class="h-[40px] shrink-0 bg-[#1b3340] flex items-center text-white">
  <div class="w-[48px] flex justify-center"><svg class="w-4 h-4" viewBox="0 0 16 16"><path d="M0 2.200L6.800 1.200V7.500H0zM7.800 1L16 0v7.500H7.800zM0 8.500h6.800v6.300L0 13.800zM7.800 8.500H16V16l-8.200-1.100z" fill="#fff"/></svg></div>
  <div class="w-[343px] h-[40px] bg-[#efefef] flex items-center pl-[14px] text-[#444] text-[13px] font-['Noto_Sans_CJK_SC',sans-serif]">
    <svg class="w-[16px] h-[16px]" viewBox="0 0 16 16"><circle cx="10" cy="6" r="5" fill="none" stroke="#333" stroke-width="1.200"/><path d="M6.500 9.500L1 15" stroke="#333" stroke-width="1.400"/></svg>
    <span class="ml-[10px]">在这里输入你要搜索的内容</span>
    <svg class="w-[66px] h-[36px] ml-auto mr-[5px]" viewBox="0 0 66 36"><circle cx="8" cy="10" r="4" fill="#8fd0d0" stroke="#c99a3a" stroke-width="1.500"/><circle cx="20" cy="7" r="4" fill="#8fd0d0" stroke="#c99a3a" stroke-width="1.500"/><path d="M4 12l1 20" stroke="#b08a50" stroke-width="1.200"/><path d="M36 7q10-7 18-1l2 11 9 3q-18 7-33-1l5-2z" fill="#5f5a8f"/><path d="M10 23l7-4 45 12q3 3-3 4z" fill="#c09a70"/><path d="M10 23l7-4 3 7z" fill="#777"/></svg>
  </div>
  <div class="flex items-center h-[40px] relative">
    <div class="w-[50px] flex justify-center pl-[5px]"><div class="w-[26px] h-[24px] bg-[#0f2a44] flex items-center justify-center font-bold text-[15px] leading-none"><span class="text-[#e0452a]">Z</span><span class="text-[#dbe7f0]">Y</span></div></div>
    <div class="w-[50px] flex justify-center pl-[2px]"><svg class="w-[14px] h-[24px]" viewBox="0 0 14 24"><path d="M1 0h12v24H2z" fill="#f2d67a"/><path d="M1 0h3v24H2z" fill="#c9a94a"/></svg></div>
    <div class="w-[50px] flex justify-center pl-[4px]"><svg class="w-[24px] h-[26px]" viewBox="0 0 24 26"><path d="M0 14l7-4 6-10 11 22-6-5-6 9z" fill="#d9642a"/><path d="M0 14l7-4 5 8z" fill="#3b86c8"/></svg></div>
    <div class="w-[50px] flex justify-center pl-[7px]"><div class="w-[26px] h-[24px] bg-[#2b6cc4] relative"><span class="absolute left-0 top-[4px] w-[15px] h-[16px] bg-[#1a4f9c] text-[10px] font-bold leading-4 text-center text-white">W</span></div></div>
    <div class="w-[50px] flex justify-center pl-[2px]"><svg class="w-[24px] h-[28px]" viewBox="0 0 24 28"><path d="M1 1l13 2v14L3 15z" fill="#3f70d8" stroke="#ddd"/><path d="M5 16l16 3 1 7-16-2z" fill="#d6d6d6"/><circle cx="17" cy="22" r="5" fill="#bbb"/></svg></div>
    <div class="w-[49px] h-[40px] bg-[#4a6472] flex flex-col items-center justify-center text-[9px] font-bold leading-none -ml-[3px]"><svg class="w-[16px] h-[18px]" viewBox="0 0 16 18"><path d="M0 0h16v18H0z" fill="#16306e"/><path d="M3 3h10v3H6v2h7v7H3v-3h7v-1H3z" fill="#fff"/></svg><span class="mt-[1px]">2022</span></div>
  </div>
  <div class="ml-auto flex items-center h-[40px] pr-[25px] text-[#e6e6e6]">
    <svg class="w-3 h-[7px]" viewBox="0 0 12 7"><path d="M.5 6.500L6 1l5.500 5.500" fill="none" stroke="#ddd" stroke-width="1.200"/></svg>
    <svg class="w-[11px] h-[17px] ml-[10px]" viewBox="0 0 11 17"><rect x="3" y="0" width="6" height="11" rx="3" fill="#ddd"/><path d="M1 8a5 5 0 0 0 10 0M6 13v3M3 16h6" fill="none" stroke="#ddd"/></svg>
    <svg class="w-[15px] h-[14px] ml-[10px]" viewBox="0 0 15 14"><path d="M.5.500h14v8H.5zM5 13h5M7.500 9v4M5 .5v4H.5" fill="none" stroke="#ddd"/></svg>
    <svg class="w-[15px] h-[14px] ml-[8px]" viewBox="0 0 15 14"><path d="M1 5h3l4-4v12L4 9H1z" fill="none" stroke="#ddd"/><path d="M10 4a4 4 0 0 1 0 6M12 2a7 7 0 0 1 0 10" fill="none" stroke="#ddd"/></svg>
    <svg class="w-[15px] h-[18px] ml-[10px]" viewBox="0 0 15 18"><ellipse cx="7.500" cy="7" rx="5" ry="7" fill="#111"/><ellipse cx="7.500" cy="10" rx="3.500" ry="4" fill="#eee"/><path d="M3 10l9 0-1 3H4z" fill="#d22"/><path d="M2 16h5M8 16h5" stroke="#e6a020" stroke-width="2"/></svg>
    <svg class="w-[16px] h-[12px] ml-[11px]" viewBox="0 0 16 12"><path d="M1 3h3v6H1zM5 2h10v8H5z" fill="none" stroke="#ddd"/><path d="M6 3h7v6H6z" fill="#ddd"/></svg>
    <span class="ml-[8px] text-[14px] font-['Noto_Sans_CJK_SC',sans-serif]">英</span>
    <span class="ml-[16px] w-[13px] h-[14px] bg-white text-[#111] text-[11px] leading-[14px] text-center font-['Noto_Sans_CJK_SC',sans-serif]">拼</span>
    <div class="w-[70px] ml-[14px] flex flex-col items-center text-[12px] leading-[19px]"><span>19:53</span><span>2022/11/24</span></div>
    <div class="relative ml-[15px] w-[14px] h-[13px]"><svg class="w-[15px] h-[14px]" viewBox="0 0 15 14"><path d="M0 0h15v11H5l-3 3v-3H0z" fill="#eee"/><path d="M3 3h9M3 6h9" stroke="#555"/></svg><span class="absolute left-[7px] top-[5px] w-[14px] h-[14px] rounded-full bg-[#1b3340] border border-[#ddd] text-[10px] font-bold leading-[12px] text-center">2</span></div>
  </div>
</div>

<!-- app-switch underlines -->
<div class="absolute left-[398px] top-[766px] flex gap-[9px]">
  <span class="block w-[40px] h-[2px] bg-[#7fb0dc]"></span><span class="block w-[40px] h-[2px] bg-[#7fb0dc]"></span><span class="block w-[40px] h-[2px] bg-[#7fb0dc]"></span><span class="block w-[40px] h-[2px] bg-[#7fb0dc]"></span><span class="block w-[40px] h-[2px] bg-[#7fb0dc]"></span><span class="block w-[40px] h-[2px] bg-[#7fb0dc]"></span>
</div>

<!-- overlays -->
<div class="absolute left-[878px] top-[558px] w-[18px] h-[18px] rounded-full border-[4px] border-[#2e8fdc] bg-white"></div>
<div class="absolute left-[1343px] top-[656px] w-[21px] h-[76px] rounded-l-[8px] bg-[#1c252e]"></div>
<div class="absolute left-[960px] top-[710px] text-[22px] leading-[28px] tracking-[4px] text-white/90 whitespace-nowrap font-['Noto_Sans_CJK_SC',sans-serif]">来天那一张制屏幕状来如助何中</div>
</div>
</body></html>
